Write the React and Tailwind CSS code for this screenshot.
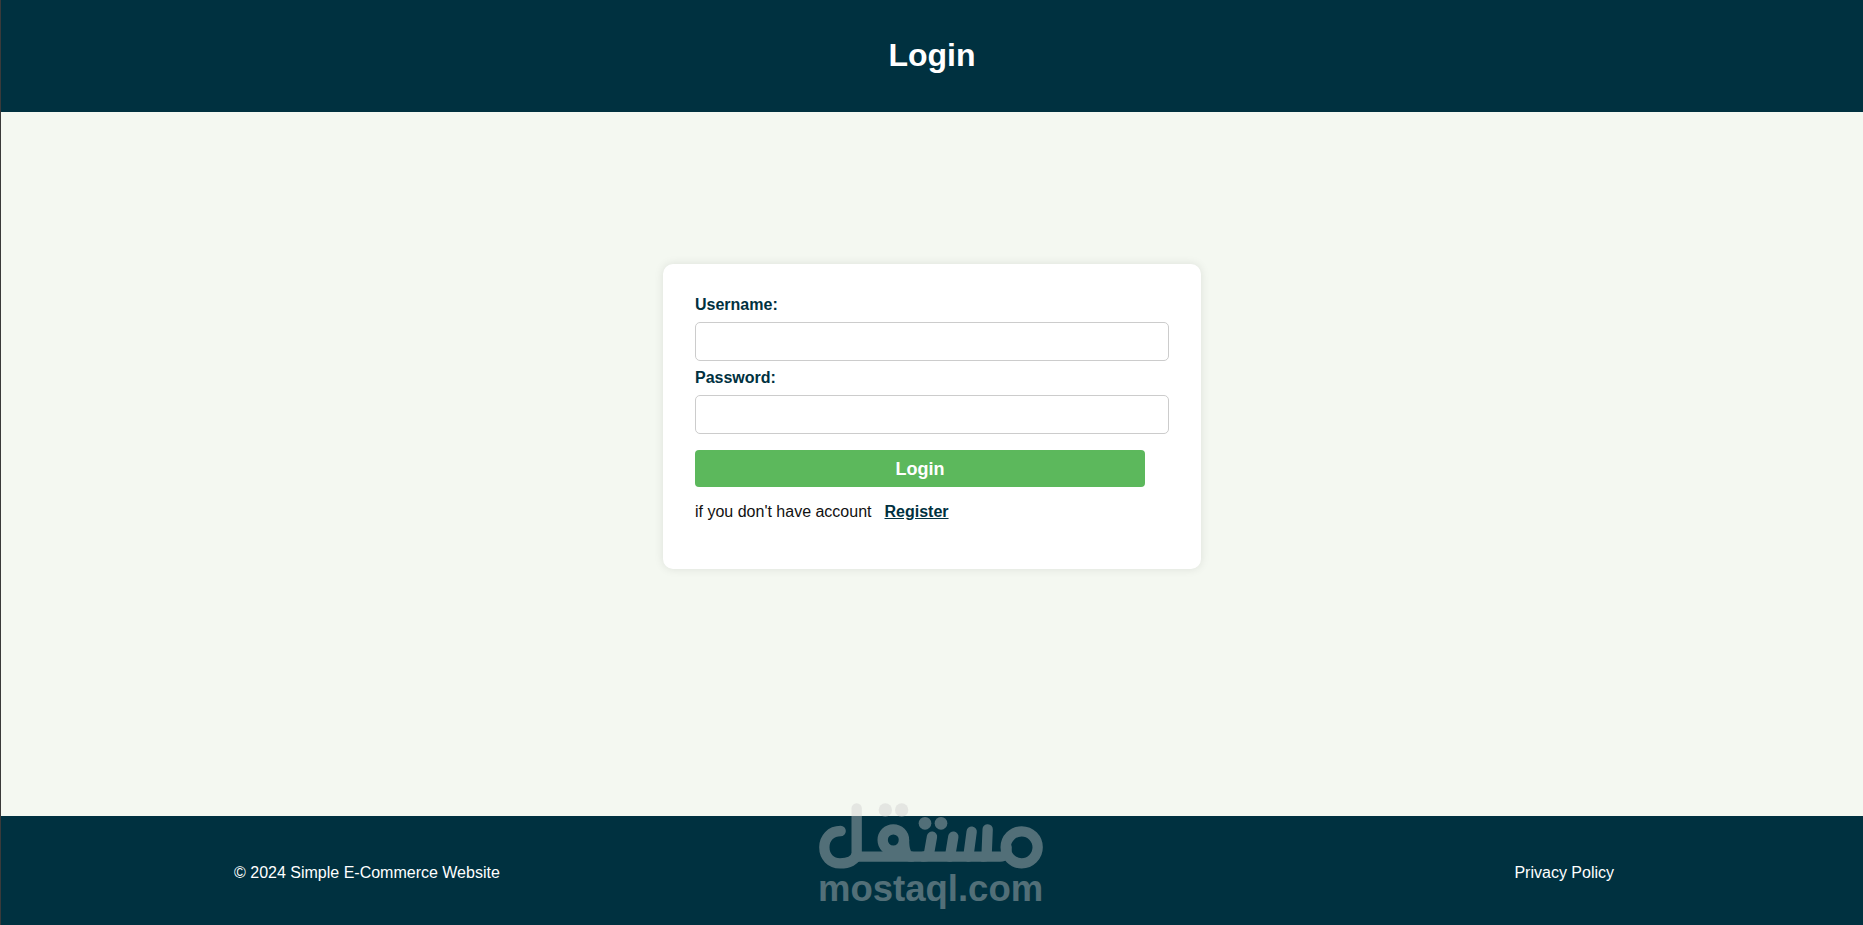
import React from 'react';

function Logo() {
  return (
    <svg viewBox="0 0 840 405" className="w-[280px] h-[135px]" fill="none">
      <g stroke="#cdcdcd" strokeWidth="31" strokeLinecap="round" strokeLinejoin="round">
        <path d="M182 123 C152 123 133 145 133 172 C133 200 152 220 180 220 C205 220 228 212 230 190 L230 55" />
        <path d="M230 200 L660 200 C675 200 680 195 680 172" />
        <circle cx="340" cy="150" r="32" />
        <path d="M372 150 C372 178 378 200 395 200" />
        <path d="M456 140 L448 185 C446 195 440 200 430 200" />
        <path d="M520 140 L510 200" />
        <path d="M575 125 L565 200" />
        <path d="M623 118 L620 190 C620 196 616 200 610 200" />
        <circle cx="725" cy="172" r="48" />
      </g>
      <g fill="#cdcdcd">
        <circle cx="316" cy="60" r="20" />
        <circle cx="365" cy="60" r="20" />
        <circle cx="435" cy="100" r="19" />
        <circle cx="483" cy="100" r="19" />
      </g>
    </svg>
  );
}

export default function App() {
  return (
    <div className="relative min-h-[925px] flex flex-col bg-[#f4f8f1] border-l border-[#3a3a3a] font-['Liberation_Sans',Arial,sans-serif]">
      <header className="h-28 bg-[#003140] flex items-center justify-center pb-0.5">
        <h1 className="text-[32px] font-bold text-white">Login</h1>
      </header>

      <main className="flex-1 flex items-start justify-center pt-[152px]">
        <form className="w-[538px] h-[305px] bg-white rounded-[10px] shadow-[0_0_10px_rgba(0,0,0,0.1)] px-8 pt-8 text-base">
          <label className="block font-bold text-[#003140] leading-[18px] mb-2">Username:</label>
          <input type="text" className="block w-[474px] h-[39px] border border-[#ccc] rounded-[5px] bg-white" />
          <label className="block font-bold text-[#003140] leading-[18px] my-2">Password:</label>
          <input type="password" className="block w-[474px] h-[39px] border border-[#ccc] rounded-[5px] bg-white" />
          <button type="button" className="block w-[450px] h-[37px] mt-4 bg-[#5cb85c] rounded-[4px] text-white font-bold text-lg">Login</button>
          <p className="mt-4 text-[#111] leading-[18px]">
            if you don't have account
            <a href="#" className="ml-[13px] font-bold text-[#003140] underline">Register</a>
          </p>
        </form>
      </main>

      <footer className="h-[109px] bg-[#003140] flex items-center justify-between pt-1 pl-[233px] pr-[249px] text-white text-base">
        <p>© 2024 Simple E-Commerce Website</p>
        <a href="#">Privacy Policy</a>
      </footer>

      <div className="absolute left-[779px] top-[790px] w-[280px] h-[135px] opacity-40 pointer-events-none">
        <Logo />
        <span className="absolute left-[38px] top-[77px] text-[36.5px] leading-[44px] font-bold text-[#cdcdcd]">mostaql.com</span>
      </div>
    </div>
  );
}
